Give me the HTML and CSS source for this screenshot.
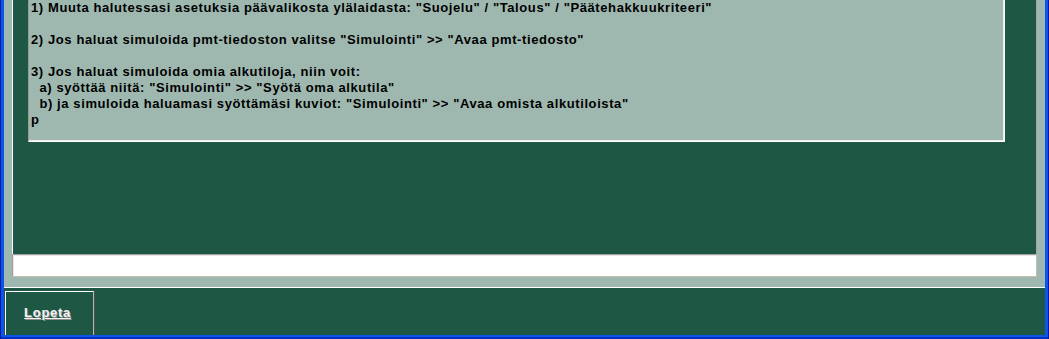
FILE: index.html
```html
<!DOCTYPE html>
<html lang="fi">
<head>
<meta charset="utf-8">
<title>Simulointi</title>
<link rel="stylesheet" href="styles.css">
</head>
<body>
<div class="frame">
  <div class="window">
    <div class="top">
      <div class="main">
        <div class="memo">1) Muuta halutessasi asetuksia päävalikosta ylälaidasta: "Suojelu" / "Talous" / "Päätehakkuukriteeri"

2) Jos haluat simuloida pmt-tiedoston valitse "Simulointi" &gt;&gt; "Avaa pmt-tiedosto"

3) Jos haluat simuloida omia alkutiloja, niin voit:
  a) syöttää niitä: "Simulointi" &gt;&gt; "Syötä oma alkutila"
  b) ja simuloida haluamasi syöttämäsi kuviot: "Simulointi" &gt;&gt; "Avaa omista alkutiloista"
p</div>
      </div>
      <div class="field"></div>
    </div>
    <div class="bottom">
      <div class="btn"><span class="btn-label">Lopeta</span></div>
    </div>
  </div>
</div>
</body>
</html>
```

FILE: styles.css
```css
html, body {
  margin: 0;
  padding: 0;
}

body {
  width: 1049px;
  height: 339px;
  overflow: hidden;
  font-family: "Liberation Sans", Arial, sans-serif;
}

.frame {
  box-sizing: border-box;
  width: 1049px;
  height: 339px;
  padding: 0 4px 4px 4px;
  background:
    linear-gradient(90deg, #001a9c 0 1px, transparent 1px calc(100% - 1px), #001a9c calc(100% - 1px)),
    linear-gradient(180deg, #0b55ea 0 calc(100% - 2px), #0030c0 calc(100% - 2px));
}

.window {
  height: 335px;
  display: flex;
  flex-direction: column;
  background: #1f5745;
}

.top {
  background: #9eb8af;
  padding: 0 8px 10px 8px;
}

.main {
  box-sizing: border-box;
  height: 254px;
  background: #1f5745;
  border-left: 1px solid #ffffff;
  border-right: 1px solid #aca899;
  padding-left: 15px;
}

.memo {
  box-sizing: border-box;
  width: 977px;
  height: 142px;
  background: #9eb8af;
  border-left: 1px solid #9a9a9a;
  border-right: 1px solid #ffffff;
  border-bottom: 1px solid #ffffff;
  box-shadow: inset -1px -1px 0 #eeeeea;
  padding: 0 0 0 2px;
  color: #000000;
  font-size: 13px;
  font-weight: bold;
  letter-spacing: 0.6px;
  line-height: 16px;
  white-space: pre;
  overflow: hidden;
}

.field {
  box-sizing: border-box;
  height: 23px;
  background: #ffffff;
  border-top: 1px solid #a0a0a0;
  border-left: 1px solid #a0a0a0;
  border-right: 1px solid #c4bfb0;
  border-bottom: 1px solid #c4bfb0;
  box-shadow: inset 1px 1px 0 #e6e6e6;
}

.bottom {
  flex: 1;
  border-top: 1px solid #ffffff;
  background: #1f5745;
  display: flex;
  align-items: flex-start;
  padding: 3px 0 0 1px;
}

.btn {
  box-sizing: border-box;
  width: 89px;
  height: 44px;
  border-top: 1px solid #ffffff;
  border-left: 1px solid #ffffff;
  border-right: 1px solid #b4b4b4;
  box-shadow: 1px 0 0 #505050;
  text-align: center;
  padding-top: 11px;
  padding-right: 4px;
}

.btn-label {
  color: #f4f4f4;
  font-size: 13px;
  font-weight: bold;
  letter-spacing: 0.7px;
  line-height: 16px;
  text-decoration: underline;
  text-shadow: 1px 1px 0 #8c8c8c;
}
```
